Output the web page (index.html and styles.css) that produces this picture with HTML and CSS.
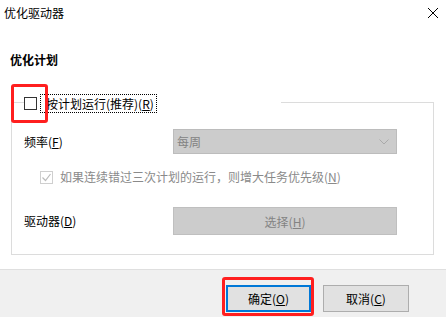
FILE: index.html
```html
<!DOCTYPE html>
<html lang="zh-CN">
<head>
    <meta charset="UTF-8">
    <title>优化驱动器</title>
    <link rel="stylesheet" href="styles.css">
</head>
<body>
    <div class="window">
        <div class="titlebar">
            <span class="title">优化驱动器</span>
            <svg class="close" width="12" height="12" viewBox="0 0 12 12">
                <path d="M1 1 L11 11 M11 1 L1 11" stroke="#000" stroke-width="1" fill="none"/>
            </svg>
        </div>

        <div class="content">
            <div class="heading">优化计划</div>

            <div class="group">
                <div class="group-caption">
                    <span class="checkbox"></span>
                    <span class="focus-label">按计划运行(推荐)(<u>R</u>)</span>
                    <span class="mark mark-check"></span>
                </div>

                <div class="row row-freq">
                    <span class="label">频率(<u>F</u>)</span>
                    <div class="select">
                        <span>每周</span>
                        <svg width="10" height="6" viewBox="0 0 10 6">
                            <path d="M0.5 0.5 L5 5 L9.5 0.5" stroke="#aaa" fill="none"/>
                        </svg>
                    </div>
                </div>

                <div class="row row-check">
                    <span class="checkbox checked">
                        <svg width="11" height="11" viewBox="0 0 11 11">
                            <path d="M1.5 5.5 L4.5 8.5 L9.5 2" stroke="#bbb" stroke-width="1.2" fill="none"/>
                        </svg>
                    </span>
                    <span class="check-text">如果连续错过三次计划的运行，则增大任务优先级(<u>N</u>)</span>
                </div>

                <div class="row row-drive">
                    <span class="label">驱动器(<u>D</u>)</span>
                    <div class="btn-disabled">选择(<u>H</u>)</div>
                </div>
            </div>
        </div>

        <div class="footer">
            <div class="btn btn-default">确定(<u>O</u>)<span class="mark mark-ok"></span></div>
            <div class="btn">取消(<u>C</u>)</div>
        </div>
    </div>
</body>
</html>
```

FILE: styles.css
```css
body {
    margin: 0;
    font-family: "Noto Sans CJK SC", "Noto Sans", sans-serif;
    font-size: 12px;
    color: #000;
    background-color: #fff;
}
u {
    text-decoration: underline;
    text-underline-offset: 1px;
}
.window {
    width: 446px;
    height: 317px;
    display: flex;
    flex-direction: column;
    overflow: hidden;
}
.titlebar {
    height: 26px;
    display: flex;
    align-items: center;
    justify-content: space-between;
    padding: 0 7px 0 4px;
}
.title {
    line-height: 16px;
}
.content {
    flex: 1;
    padding: 26px 12px 0 11px;
}
.heading {
    font-weight: bold;
    line-height: 16px;
    margin-left: -1px;
}
.group {
    position: relative;
    margin-top: 34px;
    border: 1px solid #dcdcdc;
    padding: 0 35px 19px 12px;
}
.group-caption {
    display: flex;
    align-items: center;
    width: 257px;
    height: 19px;
    margin-top: -9px;
    background-color: #fff;
}
.checkbox {
    width: 11px;
    height: 11px;
    border: 1px solid #333;
    background-color: #fff;
    display: flex;
    align-items: center;
    justify-content: center;
}
.focus-label {
    margin-left: 3px;
    padding: 0 2px 0 5px;
    height: 17px;
    line-height: 17px;
    border: 1px dotted #000;
}
.row {
    display: flex;
    align-items: center;
}
.label {
    width: 149px;
    line-height: 16px;
}
.row-freq {
    margin-top: 16px;
}
.select {
    width: 224px;
    height: 25px;
    box-sizing: border-box;
    border: 1px solid #bcbcbc;
    background-color: #cccccc;
    color: #838383;
    display: flex;
    align-items: center;
    justify-content: space-between;
    padding: 0 7px 0 3px;
}
.row-check {
    margin-top: 15px;
    margin-left: 16px;
    height: 16px;
    color: #8a8a8a;
}
.checkbox.checked {
    border-color: #cfcfcf;
}
.check-text {
    margin-left: 7px;
    line-height: 16px;
}
.row-drive {
    margin-top: 22px;
}
.btn-disabled {
    width: 224px;
    height: 28px;
    box-sizing: border-box;
    border: 1px solid #bfbfbf;
    background-color: #cccccc;
    color: #838383;
    display: flex;
    align-items: center;
    justify-content: center;
}
.footer {
    height: 48px;
    box-sizing: border-box;
    border-top: 1px solid #dfdfdf;
    background-color: #f0f0f0;
    display: flex;
    justify-content: flex-end;
    align-items: flex-start;
    gap: 12px;
    padding: 15px 37px 0 0;
}
.btn {
    position: relative;
    width: 86px;
    height: 27px;
    box-sizing: border-box;
    border: 1px solid #adadad;
    background-color: #e1e1e1;
    display: flex;
    align-items: center;
    justify-content: center;
}
.btn-default {
    border: 2px solid #0078d7;
    width: 85px;
}

/* red highlight marks drawn over the screenshot */
.mark {
    position: absolute;
    border: 3px solid #ff1f1f;
    border-radius: 3px;
    box-sizing: border-box;
}
.mark-check {
    left: -1px;
    top: -19px;
    width: 37px;
    height: 39px;
}
.mark-ok {
    left: -6px;
    top: -10px;
    width: 92px;
    height: 39px;
}
```
